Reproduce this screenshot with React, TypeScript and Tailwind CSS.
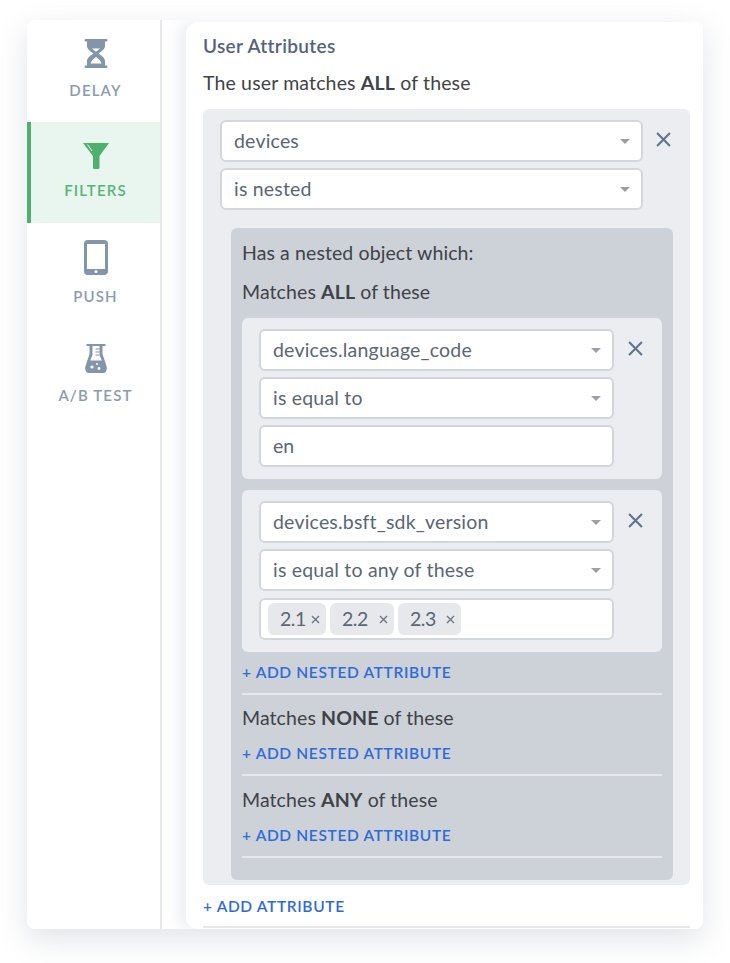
import React from "react";

const Caret = () => (
  <svg width="10" height="5" viewBox="0 0 10 5" className="shrink-0">
    <path d="M0 0h10L5 5z" fill="#9b9ea3" />
  </svg>
);

const Close = ({ size = 14 }: { size?: number }) => (
  <svg width={size} height={size} viewBox="0 0 14 14" className="shrink-0">
    <path d="M1 1l12 12M13 1L1 13" stroke="#5f7690" strokeWidth="2" fill="none" />
  </svg>
);

const Select = ({ label, width }: { label: string; width: string }) => (
  <div className={`${width} h-[42px] bg-white border-2 border-[#d3d6dd] rounded-md flex items-center justify-between pl-[12px] pr-[11px] text-[19.5px] tracking-[0.2px] text-[#5a6675]`}>
    <span>{label}</span>
    <Caret />
  </div>
);

const AddLink = ({ label }: { label: string }) => (
  <div className="text-[15.5px] leading-[20px] font-semibold tracking-[0.65px] text-[#2f6bd8]">+ {label}</div>
);

const Tag = ({ label, className }: { label: string; className: string }) => (
  <div className={`${className} h-[32px] bg-[#e6e8eb] rounded-md flex items-center justify-between pl-[12px] pr-[6px] text-[19.5px] text-[#5a6675]`}>
    <span className="tracking-[-0.5px]">{label}</span>
    <svg width="9" height="9" viewBox="0 0 9 9">
      <path d="M1 1l7 7M8 1L1 8" stroke="#6f7782" strokeWidth="1.4" fill="none" />
    </svg>
  </div>
);

const NavItem = ({ label, icon, active, className }: { label: string; icon: React.ReactNode; active?: boolean; className: string }) => (
  <div className={`${className} flex flex-col items-center ${active ? "bg-[#e8f6ef] border-l-4 border-[#4fb06d]" : "pl-[4px]"}`}>
    {icon}
    <div className={`text-[15px] leading-[18px] font-semibold tracking-[1.15px] mt-auto ${active ? "text-[#56b477]" : "text-[#8a9bb0]"}`}>{label}</div>
  </div>
);

const Hourglass = () => (
  <svg width="24" height="29" viewBox="0 0 24 29">
    <rect x="0.5" y="0" width="23" height="2.5" rx="1" fill="#8395ab" />
    <rect x="0.5" y="26.5" width="23" height="2.5" rx="1" fill="#8395ab" />
    <path fillRule="evenodd" d="M3 2h18v5c0 3.500-4 5.500-6.500 7.500C17 16.500 21 18.500 21 22v5H3v-5c0-3.500 4-5.500 6.500-7.500C7 12.500 3 10.500 3 7zM8 9.500h8c-1 1-2.500 2.200-4 3.300-1.500-1.100-3-2.300-4-3.300zM6.500 24.500h11c-.5-2.800-3.500-5-5.500-6.500-2 1.500-5 3.700-5.500 6.500z" fill="#8395ab" />
  </svg>
);

const Funnel = () => (
  <svg width="26" height="26" viewBox="0 0 26 26">
    <path d="M0 0h26L16.500 13v11.500c0 1-1 1.500-2 1.500H11.500c-.5 0-1.500-.5-1.500-1.500V13z" fill="#4fb06d" />
    <path d="M4.500 1.500L9 8" stroke="#e8f6ef" strokeWidth="1" fill="none" />
  </svg>
);

const Phone = () => (
  <svg width="24" height="35" viewBox="0 0 24 35">
    <path fillRule="evenodd" d="M4 0h16a4 4 0 0 1 4 4v27a4 4 0 0 1-4 4H4a4 4 0 0 1-4-4V4a4 4 0 0 1 4-4zM3 4v25h18V4z" fill="#8395ab" />
    <circle cx="12" cy="31.500" r="1.500" fill="#fff" />
  </svg>
);

const Flask = () => (
  <svg width="22" height="29" viewBox="0 0 22 29">
    <rect x="1.500" y="0" width="19" height="2" fill="#8395ab" />
    <path fillRule="evenodd" d="M4.500 2h13v8l4 12c1 3.500-.5 7-3.500 7H4c-3 0-4.500-3.500-3.500-7l4-12zM7.500 2v9l-2.300 5.500h11.600L14.500 11V2z" fill="#8395ab" />
    <path d="M10.500 5h4M10.500 8h4M10.500 11h4" stroke="#8395ab" strokeWidth="1" />
    <circle cx="7" cy="23" r="1.600" fill="#fff" />
    <circle cx="14" cy="24.500" r="1.400" fill="#fff" />
    <circle cx="12" cy="20" r="1" fill="#fff" />
  </svg>
);

const Group = ({ children }: { children: React.ReactNode }) => (
  <div className="bg-[#ebedf0] rounded-md pl-[17px] pr-[19px] pt-[11px] pb-[12px] flex items-start justify-between">
    <div className="flex flex-col gap-[6px]">{children}</div>
    <div className="mt-[12px]"><Close size={15} /></div>
  </div>
);

const Rule = () => <div className="h-[2px] bg-[#e6e8eb] mt-[11px]" />;

const Body = ({ children, className }: { children: React.ReactNode; className: string }) => (
  <div className={`${className} text-[19.5px] tracking-[0.1px] leading-[22px]`}>{children}</div>
);

export default function App() {
  return (
    <div className="w-[730px] h-[963px] bg-white pl-[27px] pt-[20px] font-['Lato','Noto_Sans',sans-serif] text-[#3f4347]">
      <div className="w-[676px] h-[909px] bg-white rounded-lg overflow-hidden shadow-[0_10px_30px_rgba(90,100,125,0.18)] flex">
        <div className="w-[135px] shrink-0 border-r-2 border-[#e6e8eb] bg-white flex flex-col">
          <NavItem className="h-[102px] pt-[19px] pb-[23px]" label="DELAY" icon={<Hourglass />} />
          <NavItem active className="h-[101px] pt-[21px] pb-[24px]" label="FILTERS" icon={<Funnel />} />
          <NavItem className="h-[103px] pt-[17px] pb-[21px]" label="PUSH" icon={<Phone />} />
          <NavItem className="h-[90px] pt-[18px] pb-[12px]" label="A/B TEST" icon={<Flask />} />
        </div>
        <div className="flex-1 pl-[24px] pt-[2px]">
          <div className="h-[907px] bg-white rounded-l-xl rounded-tr-xl shadow-[-8px_0_14px_rgba(90,100,125,0.10)] pl-[17px] pr-[13px] overflow-hidden">
            <div className="pt-[14px] text-[19px] tracking-[0.35px] leading-[20px] font-semibold text-[#55637a]">User Attributes</div>
            <div className="mt-[15px] text-[19.5px] tracking-[0.15px] leading-[24px]">The user matches <b>ALL</b> of these</div>
            <div className="mt-[14px] bg-[#ebedf0] rounded-md pl-[17px] pr-[17px] pt-[11px] pb-[5px]">
              <div className="flex items-start justify-between pr-[2px]">
                <div className="flex flex-col gap-[6px]">
                  <Select label="devices" width="w-[423px]" />
                  <Select label="is nested" width="w-[423px]" />
                </div>
                <div className="mt-[12px]"><Close size={15} /></div>
              </div>
              <div className="ml-[11px] mt-[18px] h-[652px] bg-[#cdd1d8] rounded-md px-[11px] pt-[14px]">
                <Body className="">Has a nested object which:</Body>
                <Body className="mt-[17px]">Matches <b>ALL</b> of these</Body>
                <div className="mt-[15px] flex flex-col gap-[11px]">
                  <Group>
                    <Select label="devices.language_code" width="w-[355px]" />
                    <Select label="is equal to" width="w-[355px]" />
                    <div className="w-[355px] h-[42px] bg-white border-2 border-[#d3d6dd] rounded-md flex items-center pl-[12px] text-[19.5px] text-[#5a6675]">en</div>
                  </Group>
                  <Group>
                    <Select label="devices.bsft_sdk_version" width="w-[355px]" />
                    <Select label="is equal to any of these" width="w-[355px]" />
                    <div className="mt-[1px] w-[355px] h-[42px] bg-white border-2 border-[#d3d6dd] rounded-md flex items-center pl-[7px] gap-[4px]">
                      <Tag label="2.1" className="w-[58px]" />
                      <Tag label="2.2" className="w-[64px]" />
                      <Tag label="2.3" className="w-[63px]" />
                    </div>
                  </Group>
                </div>
                <div className="mt-[10px]"><AddLink label="ADD NESTED ATTRIBUTE" /></div>
                <Rule />
                <Body className="mt-[12px]">Matches <b>NONE</b> of these</Body>
                <div className="mt-[14px]"><AddLink label="ADD NESTED ATTRIBUTE" /></div>
                <Rule />
                <Body className="mt-[13px]">Matches <b>ANY</b> of these</Body>
                <div className="mt-[14px]"><AddLink label="ADD NESTED ATTRIBUTE" /></div>
                <Rule />
              </div>
            </div>
            <div className="mt-[11px]"><AddLink label="ADD ATTRIBUTE" /></div>
            <div className="h-[2px] bg-[#e6e8eb] mt-[10px]" />
          </div>
        </div>
      </div>
    </div>
  );
}
